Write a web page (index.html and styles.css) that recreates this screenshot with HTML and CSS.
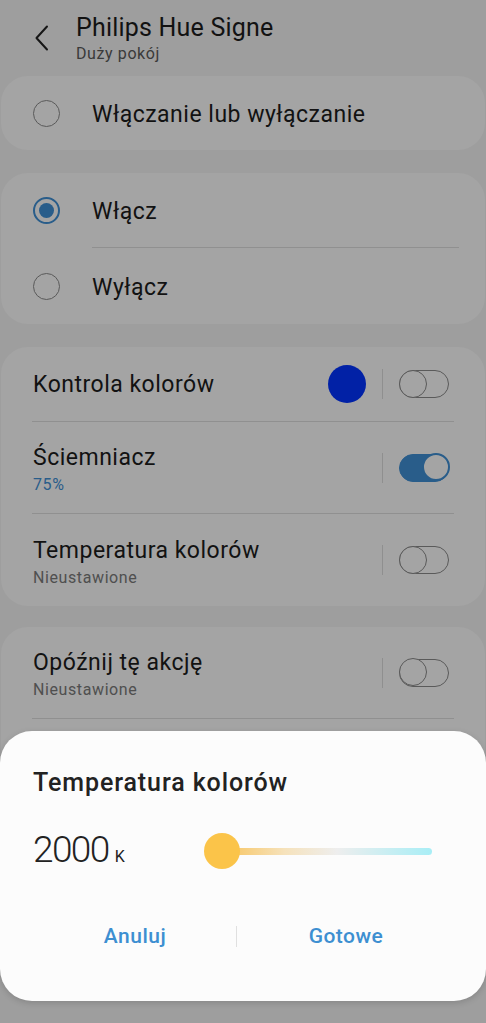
FILE: index.html
```html
<!DOCTYPE html>
<html lang="pl">
<head>
<meta charset="utf-8">
<title>Philips Hue Signe</title>
<link rel="stylesheet" href="styles.css">
</head>
<body>
<div class="page">
  <header class="header">
    <svg class="back" width="16" height="26" viewBox="0 0 16 26"><path d="M13 1.5 L2.5 13 L13 24.5" fill="none" stroke="#222" stroke-width="2" stroke-linecap="round" stroke-linejoin="round"/></svg>
    <div class="titles">
      <div class="title">Philips Hue Signe</div>
      <div class="subtitle">Duży pokój</div>
    </div>
  </header>

  <section class="card">
    <div class="radio-row">
      <span class="radio"></span>
      <span class="label">Włączanie lub wyłączanie</span>
    </div>
  </section>

  <section class="card">
    <div class="radio-row">
      <span class="radio checked"></span>
      <span class="label">Włącz</span>
    </div>
    <div class="divider radio-divider"></div>
    <div class="radio-row last">
      <span class="radio"></span>
      <span class="label">Wyłącz</span>
    </div>
  </section>

  <section class="card">
    <div class="set-row short">
      <div class="text"><div class="label">Kontrola kolorów</div></div>
      <span class="color-dot"></span>
      <span class="vline"></span>
      <span class="toggle"></span>
    </div>
    <div class="divider"></div>
    <div class="set-row">
      <div class="text"><div class="label">Ściemniacz</div><div class="sub accent">75%</div></div>
      <span class="vline"></span>
      <span class="toggle on"></span>
    </div>
    <div class="divider"></div>
    <div class="set-row tall">
      <div class="text"><div class="label">Temperatura kolorów</div><div class="sub">Nieustawione</div></div>
      <span class="vline"></span>
      <span class="toggle"></span>
    </div>
  </section>

  <section class="card last-card">
    <div class="set-row">
      <div class="text"><div class="label">Opóźnij tę akcję</div><div class="sub">Nieustawione</div></div>
      <span class="vline"></span>
      <span class="toggle"></span>
    </div>
    <div class="divider"></div>
    <div class="set-row"></div>
  </section>
</div>

<div class="scrim"></div>

<div class="dialog">
  <div class="dialog-title">Temperatura kolorów</div>
  <div class="temp-row">
    <div class="temp-value">2000<span class="unit">K</span></div>
    <div class="slider">
      <div class="track"></div>
      <span class="thumb"></span>
    </div>
  </div>
  <div class="buttons">
    <button class="btn btn-left">Anuluj</button>
    <span class="btn-sep"></span>
    <button class="btn btn-right">Gotowe</button>
  </div>
</div>
</body>
</html>
```

FILE: styles.css
```css
* { box-sizing: border-box; }
html, body {
  margin: 0;
  height: 1023px;
  overflow: hidden;
}
body {
  background: #f3f3f3;
  font-family: Roboto, "Noto Sans", "Liberation Sans", sans-serif;
  color: #1c1c1c;
  position: relative;
}
.page {
  padding: 0 1px;
  display: flex;
  flex-direction: column;
  gap: 23px;
}
.header {
  height: 76px;
  display: flex;
  align-items: flex-start;
  padding: 0 0 0 33px;
  margin-bottom: -23px;
}
.back {
  margin-top: 25px;
  flex: none;
}
.titles {
  margin-left: 26px;
  padding-top: 13px;
}
.title {
  font-size: 25px;
  letter-spacing: 0.2px;
  line-height: 30px;
  color: #1c1c1c;
}
.subtitle {
  font-size: 16px;
  letter-spacing: 0.6px;
  line-height: 22px;
  color: #5a5a5a;
}
.card {
  background: #fcfcfc;
  border-radius: 27px;
  display: flex;
  flex-direction: column;
}
.last-card { margin-top: -2px; }
.radio-row {
  height: 74px;
  display: flex;
  align-items: center;
  padding-left: 32px;
}
.radio-row.last { height: 76px; }
.radio {
  width: 27px;
  height: 27px;
  border-radius: 50%;
  border: 1.5px solid #8a8a8a;
  flex: none;
  position: relative;
}
.radio.checked {
  border: 2px solid #3f8fd4;
}
.radio.checked::after {
  content: "";
  position: absolute;
  left: 4px; top: 4px;
  width: 15px; height: 15px;
  border-radius: 50%;
  background: #3f8fd4;
}
.label {
  font-size: 23px;
  letter-spacing: 0.5px;
  line-height: 28px;
  color: #1c1c1c;
}
.radio-row .label {
  margin-left: 32px;
  padding-top: 3px;
}
.divider {
  height: 1px;
  background: #dedede;
  margin: 0 31px 0 31px;
}
.radio-divider {
  margin-left: 91px;
  margin-right: 26px;
}
.set-row {
  height: 91px;
  display: flex;
  align-items: center;
  padding: 0 36px 0 32px;
}
.set-row.tall { height: 92px; }
.set-row.short { height: 74px; }
.text {
  flex: 1;
  display: flex;
  flex-direction: column;
  padding-top: 5px;
}
.short .text { padding-top: 2px; }
.sub {
  font-size: 16px;
  letter-spacing: 0.6px;
  line-height: 22px;
  color: #7a7a7a;
  margin-top: 2px;
}
.sub.accent { color: #3f8fd4; }
.color-dot {
  width: 38px;
  height: 38px;
  border-radius: 50%;
  background: #0233ff;
  flex: none;
  margin-right: 16px;
}
.vline {
  width: 1px;
  height: 30px;
  background: #dcdcdc;
  flex: none;
  margin-right: 16px;
}
.toggle {
  width: 50px;
  height: 28px;
  border-radius: 14px;
  border: 1.5px solid #8a8a8a;
  position: relative;
  flex: none;
}
.toggle::after {
  content: "";
  position: absolute;
  left: -1.5px; top: -1.5px;
  width: 28px; height: 28px;
  border-radius: 50%;
  border: 1.5px solid #8a8a8a;
  background: #fcfcfc;
  box-sizing: border-box;
}
.toggle.on {
  background: #3f8fd4;
  border-color: #3f8fd4;
}
.toggle.on::after {
  left: auto;
  right: -1.5px;
  border: 2px solid #3f8fd4;
  background: #fcfcfc;
}
.scrim {
  position: absolute;
  inset: 0;
  background: rgba(0, 0, 0, 0.35);
}
.dialog {
  position: absolute;
  left: 0;
  right: 0;
  top: 731px;
  height: 270px;
  background: #fcfcfc;
  border-radius: 32px;
  box-shadow: 0 2px 6px rgba(0,0,0,0.15);
  padding: 37px 33px 0 33px;
  display: flex;
  flex-direction: column;
}
.dialog-title {
  font-size: 25px;
  letter-spacing: 0.9px;
  line-height: 30px;
  font-weight: 500;
  color: #222;
}
.temp-row {
  display: flex;
  align-items: center;
  margin-top: 31px;
  height: 44px;
}
.temp-value {
  font-size: 37px;
  font-weight: 300;
  color: #222;
  width: 171px;
  flex: none;
  letter-spacing: -1.6px;
  line-height: 44px;
  padding-top: 4px;
}
.unit {
  font-size: 16px;
  font-weight: 400;
  margin-left: 6px;
  letter-spacing: 0;
}
.slider {
  flex: 1;
  position: relative;
  height: 36px;
  margin-right: 21px;
  display: flex;
  align-items: center;
}
.track {
  height: 7px;
  width: 100%;
  margin-left: 17px;
  border-radius: 4px;
  background: linear-gradient(to right, #f8c35a 0%, #f6e2bb 30%, #eeeeee 55%, #a8eef6 100%);
}
.thumb {
  position: absolute;
  left: 0;
  top: 0;
  width: 36px;
  height: 36px;
  border-radius: 50%;
  background: #fbc449;
}
.buttons {
  display: flex;
  align-items: center;
  margin-top: 48px;
  margin-left: -33px;
  padding-left: 34px;
}
.btn {
  border: 0;
  background: none;
  font-family: inherit;
  font-size: 21px;
  letter-spacing: 0.5px;
  font-weight: 500;
  color: #3d8fd1;
  padding: 0;
  height: 30px;
  flex: none;
}
.btn-left { width: 202px; }
.btn-right { width: 218px; }
.btn-sep {
  width: 1px;
  height: 21px;
  background: #e0e0e0;
  flex: none;
}
```
